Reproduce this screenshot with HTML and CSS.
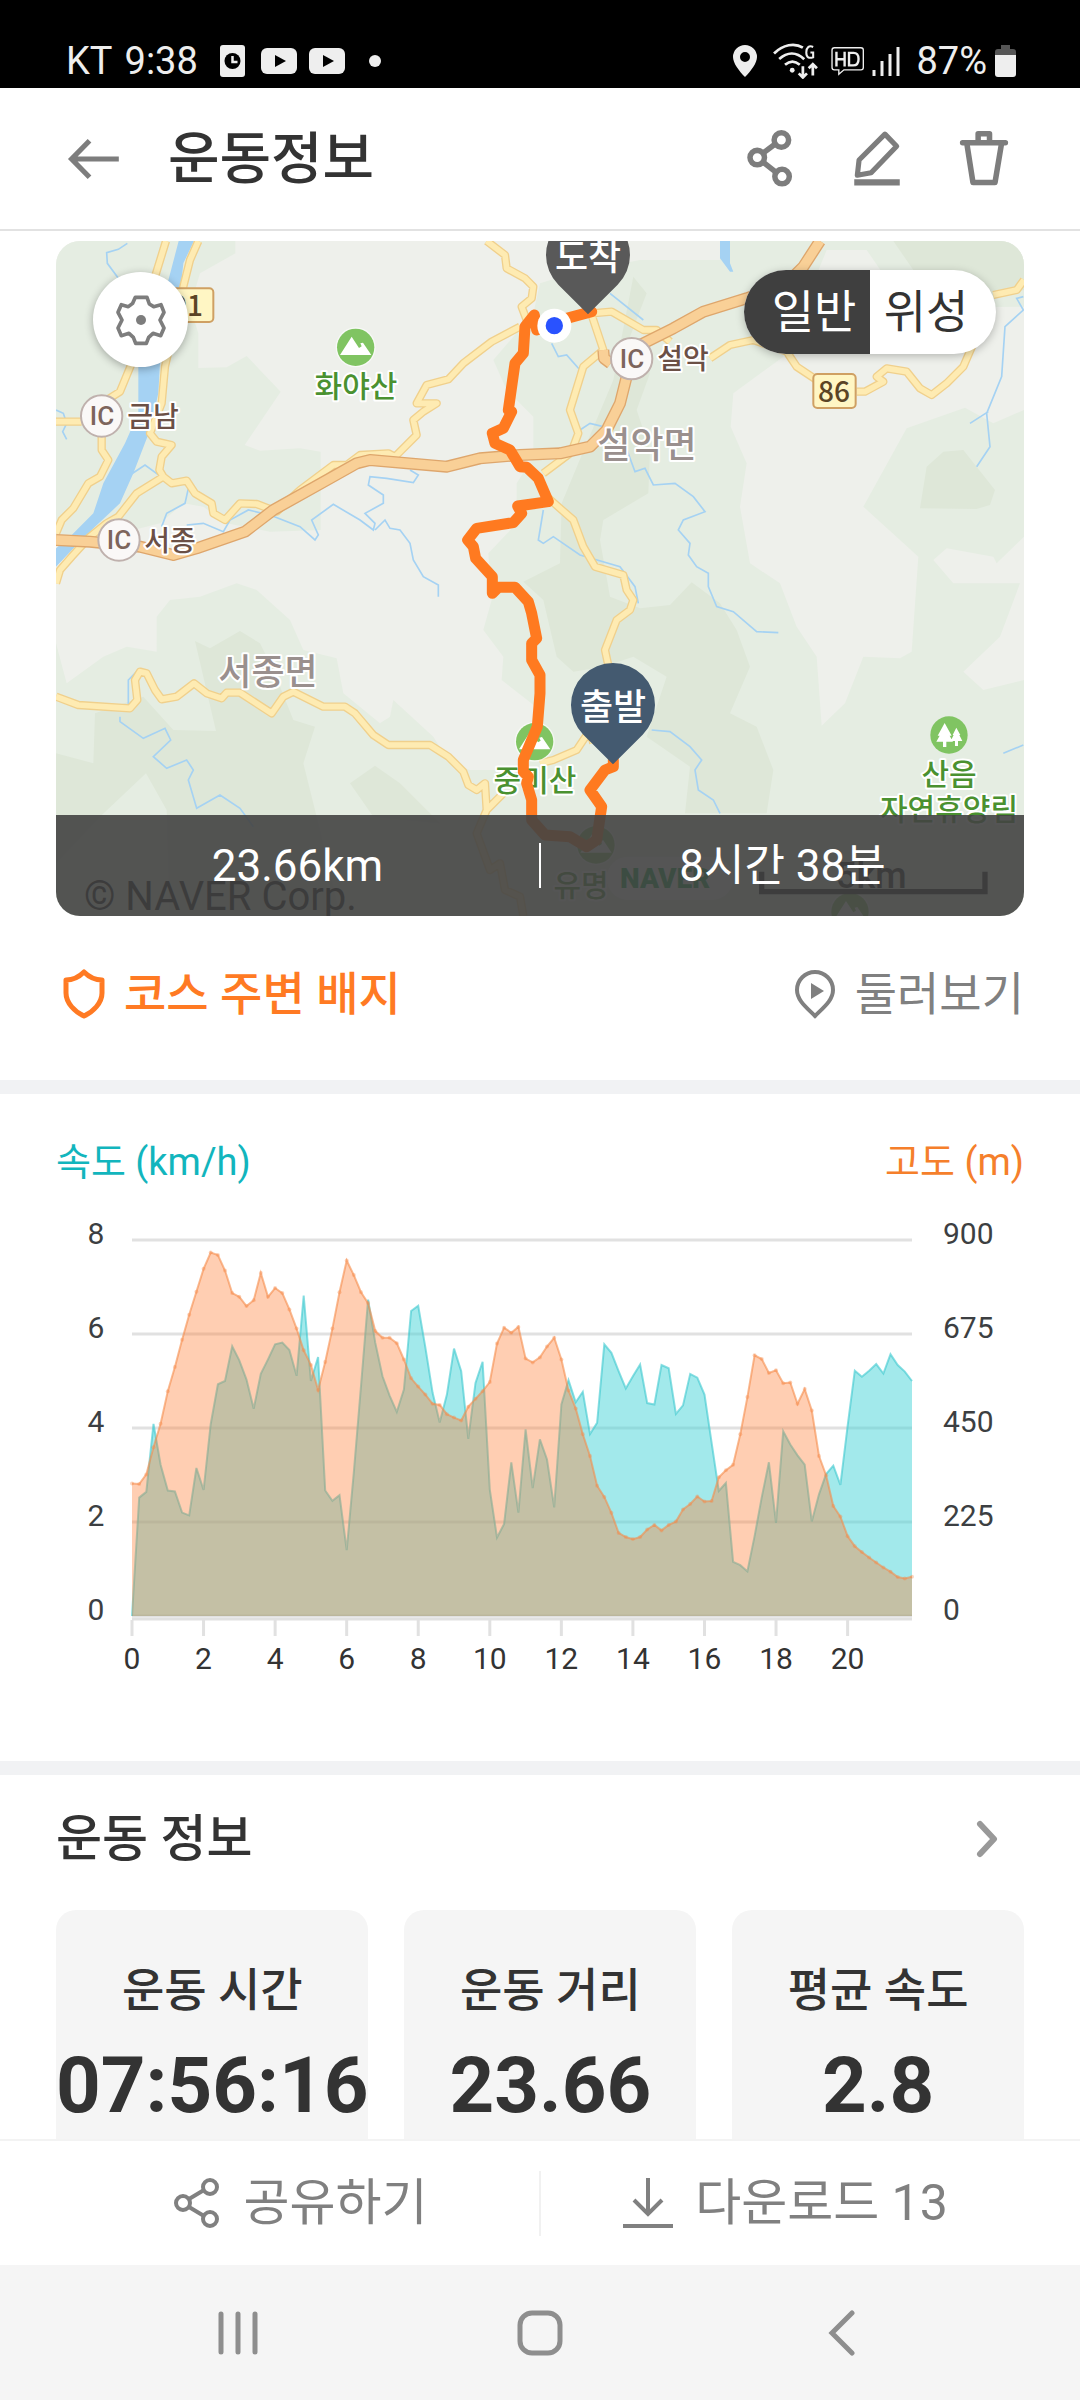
FILE: index.html
```
<!DOCTYPE html>
<html lang="ko">
<head>
<meta charset="UTF-8" />
<meta name="viewport" content="width=device-width, initial-scale=1" />
<title>운동정보</title>
<link rel="stylesheet" href="styles.css">
</head>
<body>
<div class="status-bar">
  <div class="status-left">
    <span>KT</span>
    <span>9:38</span>
    <svg class="status-clock" width="25" height="32" viewBox="0 0 25 32" aria-hidden="true">
      <rect width="25" height="32" rx="3" fill="#eee"/>
      <circle cx="12.500" cy="16" r="8" fill="#000"/>
      <path d="M12.500 11v6h5" fill="none" stroke="#eee" stroke-width="2.500"/>
    </svg>
    <svg width="36" height="26" viewBox="0 0 36 26" aria-hidden="true">
      <rect width="36" height="26" rx="6" fill="#eee"/>
      <path d="M14 7l11 6-11 6z" fill="#000"/>
    </svg>
    <svg width="36" height="26" viewBox="0 0 36 26" aria-hidden="true">
      <rect width="36" height="26" rx="6" fill="#eee"/>
      <path d="M14 7l11 6-11 6z" fill="#000"/>
    </svg>
    <i class="status-dot"></i>
  </div>
  <div class="status-right">
    <svg width="24" height="32" viewBox="0 0 24 32" aria-hidden="true">
      <path fill="#eee" fill-rule="evenodd" d="M12 0a12 12 0 0 1 12 12c0 6-6 14-12 20C6 26 0 18 0 12A12 12 0 0 1 12 0zm0 7a5 5 0 1 0 0 10 5 5 0 0 0 0-10z"/>
    </svg>
    <svg class="status-wifi" width="46" height="36" viewBox="680 128 134 104" aria-hidden="true">
      <g fill="none" stroke="#eee" stroke-width="8">
        <path d="M683 158c26-26 60-32 84-17M698 174c23-20 50-22 73 1M715 191c14-12 29-12 43 0"/>
        <path d="M767 195v31m-12-10l12 12 12-12M796 222v-31m-12 10l12-12 12 12"/>
        <path d="M797 139c-12-5-20 1-20 16s8 18 20 14v-14h-8" stroke-width="6"/>
      </g>
      <circle cx="736" cy="207" r="7" fill="#eee"/>
    </svg>
    <svg class="status-hd" width="33" height="30" viewBox="846 143 97 84" aria-hidden="true">
      <path d="M856 146h78q7 0 7 7v51q0 7-7 7h-50l-15 13v-13h-13q-7 0-7-7v-51q0-7 7-7z" fill="none" stroke="#eee" stroke-width="4"/>
      <path d="M862 158v43M886 158v43M862 180h24M899 161v37h12q16 0 16-19t-16-18z" fill="none" stroke="#eee" stroke-width="7"/>
    </svg>
    <svg class="status-signal" width="28" height="30" viewBox="0 0 28 30" aria-hidden="true">
      <path d="M2 30v-6M10 30V15M18 30V8M26 30V1" stroke="#eee" stroke-width="3"/>
    </svg>
    <span>87%</span>
    <svg width="21" height="32" viewBox="0 0 21 32" aria-hidden="true">
      <path d="M6 0h9v4h3q3 0 3 3v5H0V7q0-3 3-3h3z" fill="#555"/>
      <path d="M0 10h21v19q0 3-3 3H3q-3 0-3-3z" fill="#eee"/>
    </svg>
  </div>
</div>

<header class="app-header">
  <button class="icon-button" type="button" aria-label="뒤로">
    <svg viewBox="188 389 174 174"><path d="M347 476H212M262 423l-52 53 52 53" stroke-width="15"/></svg>
  </button>
  <h1>운동정보</h1>
  <div class="header-actions">
    <button class="icon-button" type="button" aria-label="공유">
      <svg viewBox="583 393 174 174">
        <g stroke-width="16"><circle cx="703" cy="425" r="21"/><circle cx="633" cy="476" r="21"/><circle cx="705" cy="531" r="21"/><path d="M651 462l36-27M651 490l36 28"/></g>
      </svg>
    </button>
    <button class="icon-button" type="button" aria-label="편집">
      <svg viewBox="894 393 174 174">
        <path d="M1004 408l34 35-74 77-40 7 5-44z" stroke-width="15" stroke-linejoin="round"/>
        <path d="M915 548h132" stroke-width="18"/>
      </svg>
    </button>
    <button class="icon-button" type="button" aria-label="삭제">
      <svg viewBox="1204 393 174 174">
        <path d="M1229 433h124M1242 440l17 108h64l18-108M1274 430v-23h33v23" stroke-width="16" stroke-linecap="round" stroke-linejoin="round"/>
      </svg>
    </button>
  </div>
</header>

<main>
  <section class="course">
    <div class="map">
      <svg class="map-canvas" viewBox="0 0 968 675" role="img" aria-label="코스 지도">
        <defs>
          <path id="roads" d="M378 33L345 140 275 400 240 485 185 520V660L205 690 180 740 145 760 100 835 65 870 48 910
            M475 33L450 90 430 170 400 300 375 410 365 520 330 610 350 635 395 645 365 680 358 720 370 740 M48 575H125
            M48 1060L60 1020 95 980 150 920 200 880 235 860 290 790 370 740 395 760 440 752 465 790 515 820 520 850 555 870 600 820 650 822 710 845 780 780 880 705 920 705 960 675 1045 670 1065 680 1130 615 1120 570 1150 545 1190 520 1130 520 1160 465 1225 448 1270 400 1355 335 1440 290
            M1340 33L1395 75 1400 115 1455 145 1480 170 1475 205 1445 230 1460 270
            M1655 250L1715 245 1810 300 1850 300 1890 335 M1655 255L1690 360 1630 410 1590 540 1615 610 1600 650
            M2010 385L2070 345 2140 330 2240 365 2270 410 2330 450 M2450 485H2475L2530 455 2510 440 2540 415 2600 425 2640 475 2675 495 2720 460 2770 410 2800 340 M2860 195L2930 180 2952 150
            M1590 670L1510 730 M1520 800L1600 870 1630 950 1665 1010 1750 1035 1760 1080 1780 1110 1770 1140 1730 1170 1695 1260 1710 1330 M1660 1540L1650 1500 1610 1560 1540 1590 1500 1600
            M48 1400L115 1425 270 1435 292 1410 285 1350 300 1325 320 1330 345 1380 365 1408 410 1400 462 1360 500 1390 545 1405 560 1388 600 1388 695 1450 730 1400 760 1385 850 1430 915 1430 945 1450 1000 1515 1045 1545 1170 1545 1225 1580 1270 1625 1285 1665 1310 1680 1335 1660 1340 1740 1310 1810 1350 1920 1380 1900 1395 1980 1440 2000 1450 2058 M1340 1740L1390 1690"/>
          <path id="highway" d="M48 930L150 935 300 950 400 975 470 955 615 905 700 840 870 745 950 700 990 690 1220 710 1320 685 1440 675 1560 670 1650 650 1700 600 1740 520 1760 440 M1690 360L1692 385 1712 400 M1780 355L1900 295 1990 245 2120 205 2240 160 2290 110 2340 33"/>
          <g id="mountain">
            <circle r="60" fill="#fff" opacity=".6"/>
            <circle r="56" fill="#80c462"/>
            <path d="M-47 23L-12-32 10 2 18-3 14-12 22-14 47 23z" fill="#fff"/>
          </g>
        </defs>
        <g transform="translate(-16 -11) scale(.33333)">
          <!-- 녹지 -->
          <path fill="#e5ede2" d="M48 33H586V70L480 130 450 230 475 310V414L560 412 620 378 722 485 614 645 660 662 780 655 842 665V900L690 905 560 880 490 830 430 820 360 880 280 900 48 920z"/>
          <path fill="#e5ede2" d="M1500 160L1600 130 1800 90 2040 90 2050 33H2952V2058H48V1240L80 1360 190 1280 260 1250 350 1265V1160L390 1110 480 1100 590 1060 650 1080 750 1170 790 1260 890 1285 910 1390 1020 1480 1050 1460 1060 1410 1180 1520 1230 1600 1290 1620 1440 1620 1500 1440 1385 1350 1390 1280 1330 1200 1355 1110 1345 970 1430 880V760L1480 680V560L1400 480 1360 390 1480 250z"/>
          <path fill="#eef0eb" d="M2480 60L2360 60 2230 380 2080 490 2072 590 2120 700 2100 830 2130 1000 2220 1060 2270 1190 2330 1280 2345 1487 2415 1420 2470 1280 2580 1285 2615 1265 2635 980 2470 830 2600 595 2775 533 2860 580 2952 540V230L2600 235zM2680 990L2720 955 2860 980 2870 1000 2952 920V1350L2830 1380 2770 1325 2880 1220 2940 1060 2740 1060z"/>
          <path fill="#dee7d8" d="M1780 140L1820 190 1770 320 1830 430 1790 540 1830 660 1825 790 1690 870 1680 930 1710 1100 1800 1135 1890 1125 1955 1057 2040 1120 2090 1200 2130 1310 2070 1450 2150 1490 2200 1620 2180 1750 1935 1750 1950 1610 1820 1520 1880 1340 1780 1280 1690 1310 1600 1325 1550 1280 1510 1110 1450 1055 1560 1000 1565 820 1640 640 1720 450zM2660 710L2710 665 2770 660 2865 780 2850 825 2810 837 2640 835zM2560 33H2952V180L2870 200 2620 120z"/>
          <path fill="#dee7d8" d="M48 1570L160 1600 165 1450 310 1400 400 1500 528 1503 465 1233 510 1255 600 1203 660 1240 700 1320 760 1470 825 1490 790 1600 830 1760 900 2058H390L380 1740 318 1630 180 1760 48 1900zM930 1660L1005 1607 1080 1660 1200 1780 1000 1760z"/>
          <!-- 하천 -->
          <path fill="#a5d2f3" d="M416 33H462L430 100 420 200 395 300 360 400 355 490 330 600 280 730 240 820 165 890 105 950 48 1010V955L90 920 160 850 190 760 255 640 295 550V380L380 170zM2040 33H2070V100L2080 125 2070 125 2040 85z"/>
          <path class="stream" d="M262 40L235 58 200 68 202 100 235 145M48 540L70 550 80 580 68 605 80 628M270 735L315 705 370 745M445 775L435 820 380 850 365 890M440 885L490 880 550 905 570 870 625 840 690 855 780 890 825 930 835 915 815 870 880 823 960 870 1000 900 1005 880 975 850 1030 820 1030 795 985 765 990 740 1040 745 1120 758 1135 735 1110 720M1005 900L1035 870 1050 895 1080 900 1110 940 1120 990 1150 1040 1195 1065V1100"/>
          <path class="stream" d="M1535 340L1555 380 1580 375 1620 420M1710 190L1810 270M1620 600L1650 580 1690 590M1750 630L1785 725 1815 715 1840 765 1905 760 1960 800 1995 845 1930 870 1915 900 1950 940 1945 975 1970 1010 2005 1030 2005 1070 2030 1130 2080 1145 2150 1205 2215 1208M1510 840L1495 930 1510 940 1540 920 1620 975 1740 1010 1785 1070 1795 1120M2950 200L2930 205 2950 240 2895 290 2885 440 2840 550 2850 650 2810 710M2845 545L2790 580M240 1460L240 1475 310 1525 375 1495 392 1530 340 1580 380 1615 440 1590 460 1620 445 1650 470 1735 540 1695 600 1735 640 1790M265 1430V1350L290 1325M1835 1500L1890 1505 1950 1550 1985 1590 1965 1620 1975 1680 2020 1710 2040 1750M2890 1570L2950 1545"/>
          <!-- 도로 -->
          <use href="#roads" class="road-edge"/>
          <use href="#roads" class="road"/>
          <use href="#highway" class="highway-edge"/>
          <use href="#highway" class="highway"/>
          <g fill="#fff6c4" stroke="#cfa063" stroke-width="6">
            <rect x="350" y="175" width="170" height="101" rx="12"/>
            <rect x="2320" y="432" width="127" height="102" rx="12"/>
          </g>
          <g fill="#faf8f7" stroke="#bfb1ad" stroke-width="6">
            <circle cx="185" cy="558" r="62"/>
            <circle cx="237" cy="930" r="62"/>
            <circle cx="1775" cy="386" r="62"/>
          </g>
          <use href="#mountain" x="947" y="352"/>
          <use href="#mountain" x="1484" y="1535"/>
          <use href="#mountain" x="1668" y="1845"/>
          <use href="#mountain" x="2430" y="2045"/>
          <g transform="translate(2727 1515)">
            <circle r="56" fill="#80c462"/>
            <path d="M-13-36L8 2H2L12 20H-8V36H-18V20H-38L-28 2H-34zM22-22L34 0H31L40 18H27V33H18V18H5L14 0H11z" fill="#fff"/>
          </g>
        </g>
        <g class="map-label">
          <g class="place">
            <text x="300" y="156">화야산</text>
            <text x="479" y="550">중미산</text>
            <text x="893" y="544">산음</text>
            <text x="893" y="579">자연휴양림</text>
            <text x="525" y="655">유명</text>
          </g>
          <g class="town">
            <text x="591" y="217">설악면</text>
            <text x="212" y="444">서종면</text>
          </g>
          <g class="junction">
            <text x="97" y="186">금남</text>
            <text x="114" y="310">서종</text>
            <text x="627" y="128">설악</text>
          </g>
          <g class="ic">
            <text x="46" y="184">IC</text>
            <text x="63" y="308">IC</text>
            <text x="576" y="127">IC</text>
          </g>
          <g class="route-no">
            <text x="123" y="75">391</text>
            <text x="778" y="161">86</text>
          </g>
        </g>
        <g transform="translate(-16 -11) scale(.33333)">
          <rect x="1700" y="1880" width="380" height="130" rx="65" fill="#fff"/>
          <path d="M2165 1925v60h670v-60" fill="none" stroke="#111" stroke-width="16"/>
          <path class="route" d="M1655 245L1580 265 1530 290 1490 300 1483 255 1455 290 1450 370 1425 400 1405 540 1415 545 1390 595 1357 610 1365 640 1410 660 1440 710 1460 712 1495 745 1525 815 1433 828 1445 850 1420 878 1310 895 1283 930 1300 950 1307 985 1357 1040V1090L1375 1072H1425L1465 1115 1475 1150 1490 1225 1475 1240V1290L1500 1335V1390L1492 1490 1450 1590V1625L1465 1640 1460 1660 1475 1710V1770L1515 1815 1590 1820 1640 1850 1670 1830 1685 1730 1650 1680 1695 1620 1720 1610V1590"/>
          <path d="M1644 253L1555 164A126 126 0 1 1 1733 164z" fill="#595959"/>
          <path d="M1719 1603L1630 1514A126 126 0 1 1 1808 1514z" fill="#445a70"/>
          <circle cx="1543" cy="287" r="51" fill="#fff"/>
          <circle cx="1543" cy="287" r="26" fill="#2952ff"/>
        </g>
        <g class="pin-label">
          <text x="532" y="29">도착</text>
          <text x="557" y="479">출발</text>
        </g>
        <text x="564" y="647" class="map-brand">NAVER</text>
        <text x="780" y="647" class="map-scale">5km</text>
        <text x="28" y="669" class="map-copyright">© NAVER Corp.</text>
      </svg>
      <button class="map-settings" type="button" aria-label="지도 설정">
        <svg width="54" height="54" viewBox="221 187 162 162" aria-hidden="true">
          <path d="M285 200H320L327 220 340 228 362 222 371 245 359 268 371 292 361 315 338 308 325 320 318 338H286L279 320 266 308 243 315 233 292 245 268 233 245 243 222 264 228 277 218z" fill="none" stroke="#7d7d7d" stroke-width="11" stroke-linejoin="round"/>
          <circle cx="302" cy="268" r="15" fill="#7d7d7d"/>
        </svg>
      </button>
      <div class="map-type" role="group" aria-label="지도 종류">
        <button type="button" aria-pressed="true">일반</button>
        <button type="button" aria-pressed="false">위성</button>
      </div>
      <div class="map-summary">
        <span>23.66km</span>
        <i class="divider"></i>
        <span>8시간 38분</span>
      </div>
    </div>
    <div class="course-links">
      <a class="badge-link" href="#badge">
        <svg width="44" height="50" viewBox="0 0 44 50" aria-hidden="true">
          <path d="M22 3C17 8 10 11 4 11V24C4 34 13 43 22 47 31 43 40 34 40 24V11C34 11 27 8 22 3z" fill="none" stroke="currentColor" stroke-width="5" stroke-linejoin="round"/>
        </svg>
        코스 주변 배지
      </a>
      <a class="look-link" href="#look">
        <svg width="44" height="50" viewBox="0 0 44 50" aria-hidden="true">
          <path d="M22 3A18 18 0 0 1 40 21C40 31 31 38 22 47 13 38 4 31 4 21A18 18 0 0 1 22 3z" fill="none" stroke="currentColor" stroke-width="4"/>
          <path d="M18 14l13 8-13 8z" fill="currentColor"/>
        </svg>
        둘러보기
      </a>
    </div>
  </section>

  <section class="chart-section">
    <div class="chart-titles">
      <span class="speed-title">속도 (km/h)</span>
      <span class="altitude-title">고도 (m)</span>
    </div>
    <svg id="chart" class="chart" viewBox="0 0 968 480" role="img" aria-label="속도와 고도 그래프"></svg>
  </section>

  <section class="info">
    <div class="info-head">
      <h2>운동 정보</h2>
      <a class="more-link" href="#detail" aria-label="더보기">
        <svg width="44" height="44" viewBox="0 0 44 44" aria-hidden="true"><path d="M14 7l14 15-14 15" fill="none" stroke="#999" stroke-width="6" stroke-linecap="round" stroke-linejoin="round"/></svg>
      </a>
    </div>
    <div class="cards">
      <div class="card"><h3>운동 시간</h3><p>07:56:16</p></div>
      <div class="card"><h3>운동 거리</h3><p>23.66</p></div>
      <div class="card"><h3>평균 속도</h3><p>2.8</p></div>
    </div>
  </section>
</main>

<footer class="actions">
  <button type="button">
    <svg width="50" height="54" viewBox="0 0 50 54" aria-hidden="true">
      <g fill="none" stroke="currentColor" stroke-width="4"><circle cx="38" cy="11" r="7"/><circle cx="11" cy="27" r="7"/><circle cx="38" cy="43" r="7"/><path d="M17 23l15-9M17 31l15 9"/></g>
    </svg>
    공유하기
  </button>
  <i class="divider"></i>
  <button type="button">
    <svg width="50" height="54" viewBox="0 0 50 54" aria-hidden="true">
      <path d="M25 2v36M11 24l14 14 14-14M0 50h50" fill="none" stroke="currentColor" stroke-width="4"/>
    </svg>
    다운로드 13
  </button>
</footer>
<nav class="system-nav">
  <button type="button" aria-label="최근 앱"><svg width="46" height="46" viewBox="0 0 46 46"><path d="M6 4v38M23 4v38M40 4v38" stroke-width="5" stroke-linecap="round"/></svg></button>
  <button type="button" aria-label="홈"><svg width="46" height="46" viewBox="0 0 46 46"><rect x="3" y="3" width="40" height="40" rx="12" stroke-width="5"/></svg></button>
  <button type="button" aria-label="이전"><svg width="46" height="46" viewBox="0 0 46 46"><path d="M33 3L13 23l20 20" stroke-width="5" stroke-linecap="round"/></svg></button>
</nav>
<script src="chart.js"></script>
</body>
</html>
```

FILE: chart.js
```
// 0.2km 간격 기록
const speed = [
  0, 2.52, 2.64, 4.09, 3.22, 2.67, 2.65, 2.2, 2.14, 3.15,
  2.68, 4.08, 4.93, 5, 5.74, 5.44, 5.03, 4.41, 5.15, 5.46,
  5.78, 5.82, 5.66, 5.11, 6.82, 5, 5.51, 2.67, 2.45, 2.57,
  1.4, 3.05, 4.89, 6.73, 5.81, 5.1, 4.69, 4.34, 4.82, 6.49,
  6.6, 5.71, 4.75, 4.12, 4.71, 5.69, 5.21, 3.77, 4.96, 5.41,
  2.69, 1.67, 1.96, 3.27, 2.2, 3.97, 2.72, 3.76, 3.33, 2.31,
  4.5, 5.02, 4.55, 4.77, 3.87, 4.11, 5.78, 5.6, 5.21, 4.84,
  5.1, 5.35, 4.53, 4.5, 5.34, 5.27, 4.3, 4.48, 5.15, 5.07,
  4.71, 3.69, 2.66, 2.83, 1.15, 1.08, 0.95, 1.7, 2.52, 3.27,
  1.98, 3.93, 3.65, 3.42, 3.22, 2.01, 2.59, 3.02, 3.2, 2.79,
  4.04, 5.22, 5.09, 5.22, 5.36, 5.16, 5.57, 5.34, 5.2, 5
];
const altitude = [
  317, 316, 339, 404, 460, 538, 596, 661, 721, 776,
  831, 870, 864, 827, 773, 764, 742, 756, 821, 764,
  785, 773, 734, 688, 636, 601, 541, 608, 688, 775,
  851, 816, 775, 749, 682, 666, 666, 653, 614, 569,
  549, 530, 508, 505, 483, 475, 468, 501, 520, 538,
  560, 652, 690, 678, 692, 616, 607, 619, 645, 666,
  614, 540, 497, 435, 383, 312, 285, 247, 199, 189,
  184, 189, 207, 218, 205, 218, 226, 255, 268, 286,
  274, 275, 332, 349, 362, 435, 524, 624, 615, 582,
  588, 557, 559, 508, 543, 492, 383, 337, 263, 238,
  191, 167, 153, 140, 128, 116, 106, 93, 90, 94
];

const chart = document.getElementById('chart');
const left = 76;
const right = 856;
const top0 = 30;
const bottom = 406;
const step = (right - left) / (speed.length - 1);

function add(name, attrs, text) {
  const el = document.createElementNS('http://www.w3.org/2000/svg', name);
  for (const key in attrs) el.setAttribute(key, attrs[key]);
  if (text !== undefined) el.textContent = text;
  chart.appendChild(el);
}

function toPoints(data, max) {
  return data.map((v, i) => [
    (left + i * step).toFixed(1),
    (bottom - (v / max) * (bottom - top0)).toFixed(1)
  ]);
}

for (let i = 0; i <= 4; i++) {
  const y = bottom - i * 94;
  add('line', { class: 'grid', x1: left, x2: right, y1: y, y2: y });
  add('text', { class: 'y-label', x: 40, y: y + 4, 'text-anchor': 'middle' }, i * 2);
  add('text', { class: 'y-label', x: 887, y: y + 4 }, i * 225);
}
add('line', { class: 'grid', x1: left, x2: right, y1: bottom + 3, y2: bottom + 3 });
for (let km = 0; km <= 20; km += 2) {
  const x = left + km * 5 * step;
  add('line', { class: 'grid', x1: x, x2: x, y1: bottom + 4, y2: bottom + 20 });
  add('text', { class: 'x-label', x: x, y: 459, 'text-anchor': 'middle' }, km);
}

function drawArea(name, data, max) {
  const points = toPoints(data, max);
  const line = points.join(' ');
  add('polygon', { class: name + '-area', points: `${left},${bottom} ${line} ${right},${bottom}` });
  add('polyline', { class: name + '-line', points: line });
  return points;
}

drawArea('speed', speed, 8);
drawArea('altitude', altitude, 900).forEach(([x, y]) => {
  add('circle', { class: 'altitude-dot', cx: x, cy: y, r: 2 });
});
```

FILE: styles.css
```
* {
  box-sizing: border-box;
}
body {
  margin: 0;
  height: 100vh;
  display: flex;
  flex-direction: column;
  font-family: Roboto, 'Noto Sans CJK KR', sans-serif;
  color: #333;
  background: #fff;
}
h1, h2, h3, p {
  margin: 0;
}
button {
  border: 0;
  padding: 0;
  background: none;
  font: inherit;
  color: inherit;
}
a {
  text-decoration: none;
}
svg {
  display: block;
  flex: none;
}

/* 상태바 */
.status-bar {
  flex: none;
  height: 88px;
  padding: 34px 64px 0 66px;
  display: flex;
  justify-content: space-between;
  background: #000;
  color: #eee;
  font-size: 38px;
  line-height: 54px;
}
.status-left, .status-right {
  display: flex;
  align-items: center;
}
.status-left {
  gap: 12px;
}
.status-clock {
  margin: 0 4px 0 10px;
}
.status-dot {
  width: 12px;
  height: 12px;
  margin-left: 12px;
  border-radius: 50%;
  background: #eee;
}
.status-right {
  gap: 8px;
}
.status-wifi {
  margin-left: 8px;
}
.status-hd {
  margin-left: 4px;
}
.status-signal {
  margin-right: 8px;
}

/* 헤더 */
.app-header {
  flex: none;
  height: 143px;
  padding: 0 66px 0 64px;
  display: flex;
  align-items: center;
  border-bottom: 2px solid #e2e2e2;
}
.icon-button {
  width: 60px;
  height: 60px;
}
.icon-button svg {
  width: 100%;
  height: 100%;
  fill: none;
  stroke: #7d7d7d;
}
.app-header h1 {
  margin-left: 44px;
  font-size: 56px;
  font-weight: 500;
  line-height: 72px;
}
.header-actions {
  margin-left: auto;
  display: flex;
  gap: 47px;
}

main {
  flex: 1;
  min-height: 0;
  overflow: hidden;
}
section {
  padding-left: 56px;
  padding-right: 56px;
}

/* 지도 */
.course {
  padding-top: 10px;
  border-bottom: 14px solid #f1f2f4;
}
.map {
  position: relative;
  border-radius: 24px;
  overflow: hidden;
  background: #eef0eb;
}
.map-canvas {
  width: 100%;
}
.stream {
  fill: none;
  stroke: #a5d2f3;
  stroke-width: 5;
}
.road-edge, .road, .highway-edge, .highway, .route {
  fill: none;
  stroke-linejoin: round;
}
.road-edge {
  stroke: #f0d08c;
  stroke-width: 25;
}
.road {
  stroke: #feebb2;
  stroke-width: 17;
}
.highway-edge {
  stroke: #dea66c;
  stroke-width: 36;
}
.highway {
  stroke: #f9d097;
  stroke-width: 28;
}
.route {
  stroke: #ff7a20;
  stroke-width: 33;
  stroke-linecap: round;
}
.map-label {
  font-family: 'Noto Sans CJK KR', sans-serif;
  font-weight: 500;
  text-anchor: middle;
  paint-order: stroke;
  stroke: #fff;
  stroke-width: 4px;
  stroke-linejoin: round;
}
.place {
  font-size: 30px;
  fill: #4a9130;
}
.town {
  font-size: 36px;
  fill: #9a908e;
}
.junction {
  font-size: 28px;
  fill: #6b5046;
}
.ic {
  font-family: Roboto, sans-serif;
  font-size: 26px;
  fill: #7d655c;
  stroke: none;
}
.route-no {
  font-size: 28px;
  fill: #5b4426;
  stroke: none;
}
.pin-label {
  font-family: 'Noto Sans CJK KR', sans-serif;
  font-size: 36px;
  font-weight: 500;
  text-anchor: middle;
  fill: #fff;
}
.map-brand {
  font: 900 28px Roboto, sans-serif;
  fill: #03a63c;
}
.map-scale {
  font: 500 36px Roboto, sans-serif;
}
.map-copyright {
  font: 40px Roboto, sans-serif;
}
.map-settings {
  position: absolute;
  top: 31px;
  left: 37px;
  width: 95px;
  height: 95px;
  display: flex;
  align-items: center;
  justify-content: center;
  border-radius: 50%;
  background: #fff;
  box-shadow: 0 2px 8px rgba(0, 0, 0, 0.3);
}
.map-type {
  position: absolute;
  top: 29px;
  right: 28px;
  display: flex;
  border-radius: 42px;
  overflow: hidden;
  background: #fff;
  box-shadow: 0 2px 8px rgba(0, 0, 0, 0.25);
  font-size: 46px;
  line-height: 84px;
}
.map-type button {
  width: 126px;
  height: 84px;
  padding-left: 14px;
}
.map-type button + button {
  padding: 0 14px 0 0;
}
.map-type [aria-pressed="true"] {
  background: #3f3f3f;
  color: #fff;
}
.map-summary {
  position: absolute;
  left: 0;
  right: 0;
  bottom: 0;
  height: 101px;
  display: flex;
  align-items: center;
  background: rgba(66, 66, 66, 0.9);
  color: #fff;
  font-size: 44px;
  line-height: 56px;
}
.map-summary span {
  flex: 1;
  text-align: center;
}
.divider {
  width: 2px;
  height: 45px;
  background: #fff;
}
.course-links {
  padding: 50px 0 58px;
  display: flex;
  justify-content: space-between;
  font-size: 46px;
  line-height: 56px;
}
.course-links a {
  display: flex;
  align-items: center;
  gap: 18px;
}
.badge-link {
  margin-left: 6px;
  color: #ff7a23;
  font-weight: 500;
}
.look-link {
  color: #808080;
}

/* 그래프 */
.chart-section {
  padding-top: 40px;
  padding-bottom: 71px;
  border-bottom: 14px solid #f1f2f4;
}
.chart-titles {
  display: flex;
  justify-content: space-between;
  margin-bottom: 20px;
  font-size: 38px;
  line-height: 56px;
}
.speed-title {
  color: #12b5bd;
}
.altitude-title {
  color: #f57f2b;
}
.chart {
  width: 100%;
}
.grid {
  stroke: #e1e1e1;
  stroke-width: 3;
}
.y-label {
  font-size: 30px;
  fill: #3c3f42;
}
.x-label {
  font-size: 30px;
  fill: #333;
}
.speed-area {
  fill: rgba(70, 211, 216, 0.5);
}
.speed-line {
  fill: none;
  stroke: rgba(60, 200, 206, 0.6);
  stroke-width: 2;
}
.altitude-area {
  fill: rgba(255, 122, 45, 0.37);
}
.altitude-line {
  fill: none;
  stroke: rgba(245, 140, 75, 0.6);
  stroke-width: 2;
}
.altitude-dot {
  fill: rgba(245, 135, 70, 0.35);
}

/* 운동 정보 */
.info {
  padding-top: 36px;
}
.info-head {
  display: flex;
  align-items: center;
  justify-content: space-between;
  margin-bottom: 43px;
  padding-right: 14px;
}
.info-head h2 {
  font-size: 50px;
  font-weight: 500;
  line-height: 56px;
}
.cards {
  display: flex;
  gap: 36px;
}
.card {
  flex: 1;
  padding: 52px 0 80px;
  border-radius: 20px;
  background: #f5f5f5;
  text-align: center;
}
.card h3 {
  margin-bottom: 20px;
  font-size: 46px;
  font-weight: 500;
  line-height: 56px;
}
.card p {
  font: bold 78px/96px Roboto, sans-serif;
}

/* 하단 */
.actions {
  flex: none;
  height: 126px;
  display: flex;
  align-items: center;
  border-top: 2px solid #f3f3f3;
  background: #fff;
  color: #808080;
  font-size: 50px;
  line-height: 64px;
}
.actions button {
  width: 50%;
  display: flex;
  align-items: center;
  justify-content: center;
  gap: 22px;
  padding-left: 60px;
}
.actions .divider + button {
  padding: 0 50px 0 0;
}
.actions .divider {
  height: 65px;
  background: #f1f1f1;
}
.system-nav {
  flex: none;
  height: 135px;
  padding: 0 87px;
  display: flex;
  background: #f5f5f5;
}
.system-nav button {
  flex: 1;
  display: flex;
  align-items: center;
  justify-content: center;
}
.system-nav svg {
  fill: none;
  stroke: #8e8e8e;
}
```
